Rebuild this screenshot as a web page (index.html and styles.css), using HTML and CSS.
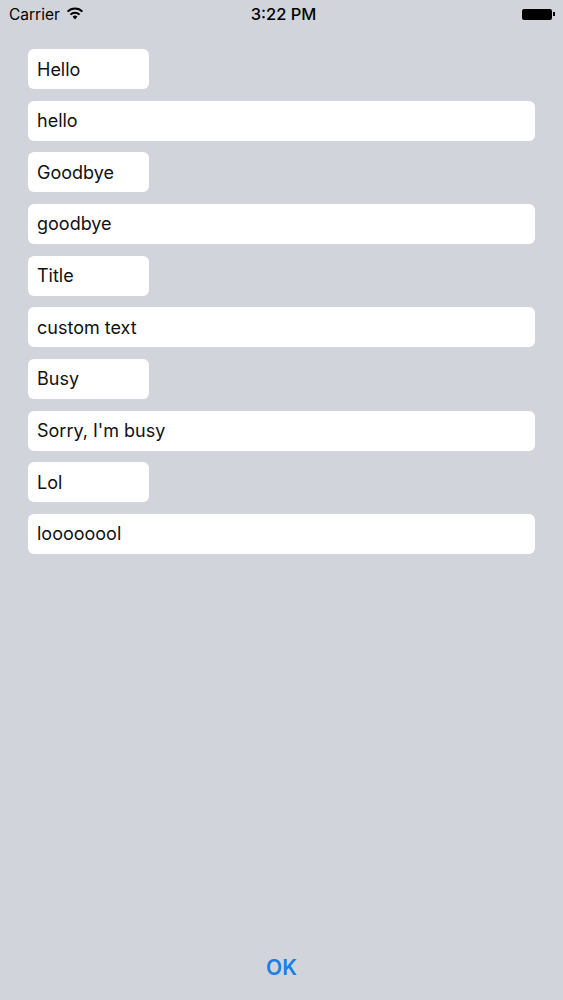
FILE: index.html
```html
<!DOCTYPE html>
<html lang="en">
<head>
  <meta charset="UTF-8">
  <meta name="viewport" content="width=device-width, initial-scale=1.0">
  <title>Fields</title>
  <link rel="stylesheet" href="styles.css">
</head>
<body>
<div class="screen">
  <div class="status-bar">
    <div class="carrier">
      Carrier
      <svg class="wifi" width="18" height="13" viewBox="0 0 18 13">
        <path d="M9 12.5 L6.6 9.8 A3.4 3.4 0 0 1 11.4 9.8 Z" fill="#000"/>
        <path d="M4.4 7.6 A6.5 6.5 0 0 1 13.6 7.6" stroke="#000" stroke-width="2" fill="none"/>
        <path d="M1.6 4.6 A10.5 10.5 0 0 1 16.4 4.6" stroke="#000" stroke-width="2" fill="none"/>
      </svg>
    </div>
    <div class="time">3:22 PM</div>
    <div class="battery">
      <span class="battery-body"></span><span class="battery-tip"></span>
    </div>
  </div>

  <div class="fields">
    <input class="field short" type="text" value="Hello">
    <input class="field" type="text" value="hello">
    <input class="field short" type="text" value="Goodbye">
    <input class="field" type="text" value="goodbye">
    <input class="field short" type="text" value="Title">
    <input class="field" type="text" value="custom text">
    <input class="field short" type="text" value="Busy">
    <input class="field" type="text" value="Sorry, I'm busy">
    <input class="field short" type="text" value="Lol">
    <input class="field" type="text" value="loooooool">
  </div>

  <button class="ok">OK</button>
</div>
</body>
</html>
```

FILE: styles.css
```css
body {
  margin: 0;
  font-family: Inter, "Liberation Sans", Arial, sans-serif;
  background-color: #d1d5db;
}
.screen {
  height: 1000px;
  display: flex;
  flex-direction: column;
}
.status-bar {
  height: 28px;
  display: flex;
  align-items: center;
  justify-content: space-between;
  padding: 0 8px 0 9px;
  font-size: 15.5px;
  color: #000;
  position: relative;
}
.carrier {
  display: flex;
  align-items: center;
  gap: 6px;
}
.wifi {
  margin-top: -2px;
}
.time {
  position: absolute;
  left: 0;
  right: 0;
  text-align: center;
  font-size: 16.5px;
  font-weight: 500;
  padding-left: 4px;
  pointer-events: none;
}
.battery {
  display: flex;
  align-items: center;
}
.battery-body {
  width: 30px;
  height: 11px;
  background-color: #000;
  border-radius: 2px;
}
.battery-tip {
  width: 2px;
  height: 4px;
  background-color: #000;
  margin-left: 1px;
}
.fields {
  display: flex;
  flex-direction: column;
  gap: 11.67px;
  padding: 21px 28px 0;
}
.field {
  box-sizing: border-box;
  height: 40px;
  width: 507px;
  padding: 0 9px;
  border: none;
  border-radius: 6px;
  background-color: #fff;
  font-family: Inter, "Liberation Sans", Arial, sans-serif;
  font-size: 18px;
  color: #111;
  outline: none;
}
.field.short {
  width: 121px;
}
.ok {
  margin-top: auto;
  margin-bottom: 20px;
  align-self: center;
  background: none;
  border: none;
  font-family: Inter, "Liberation Sans", Arial, sans-serif;
  font-size: 21px;
  font-weight: 600;
  color: #1a7fe4;
  padding: 0;
  height: 26px;
  cursor: pointer;
}
```
